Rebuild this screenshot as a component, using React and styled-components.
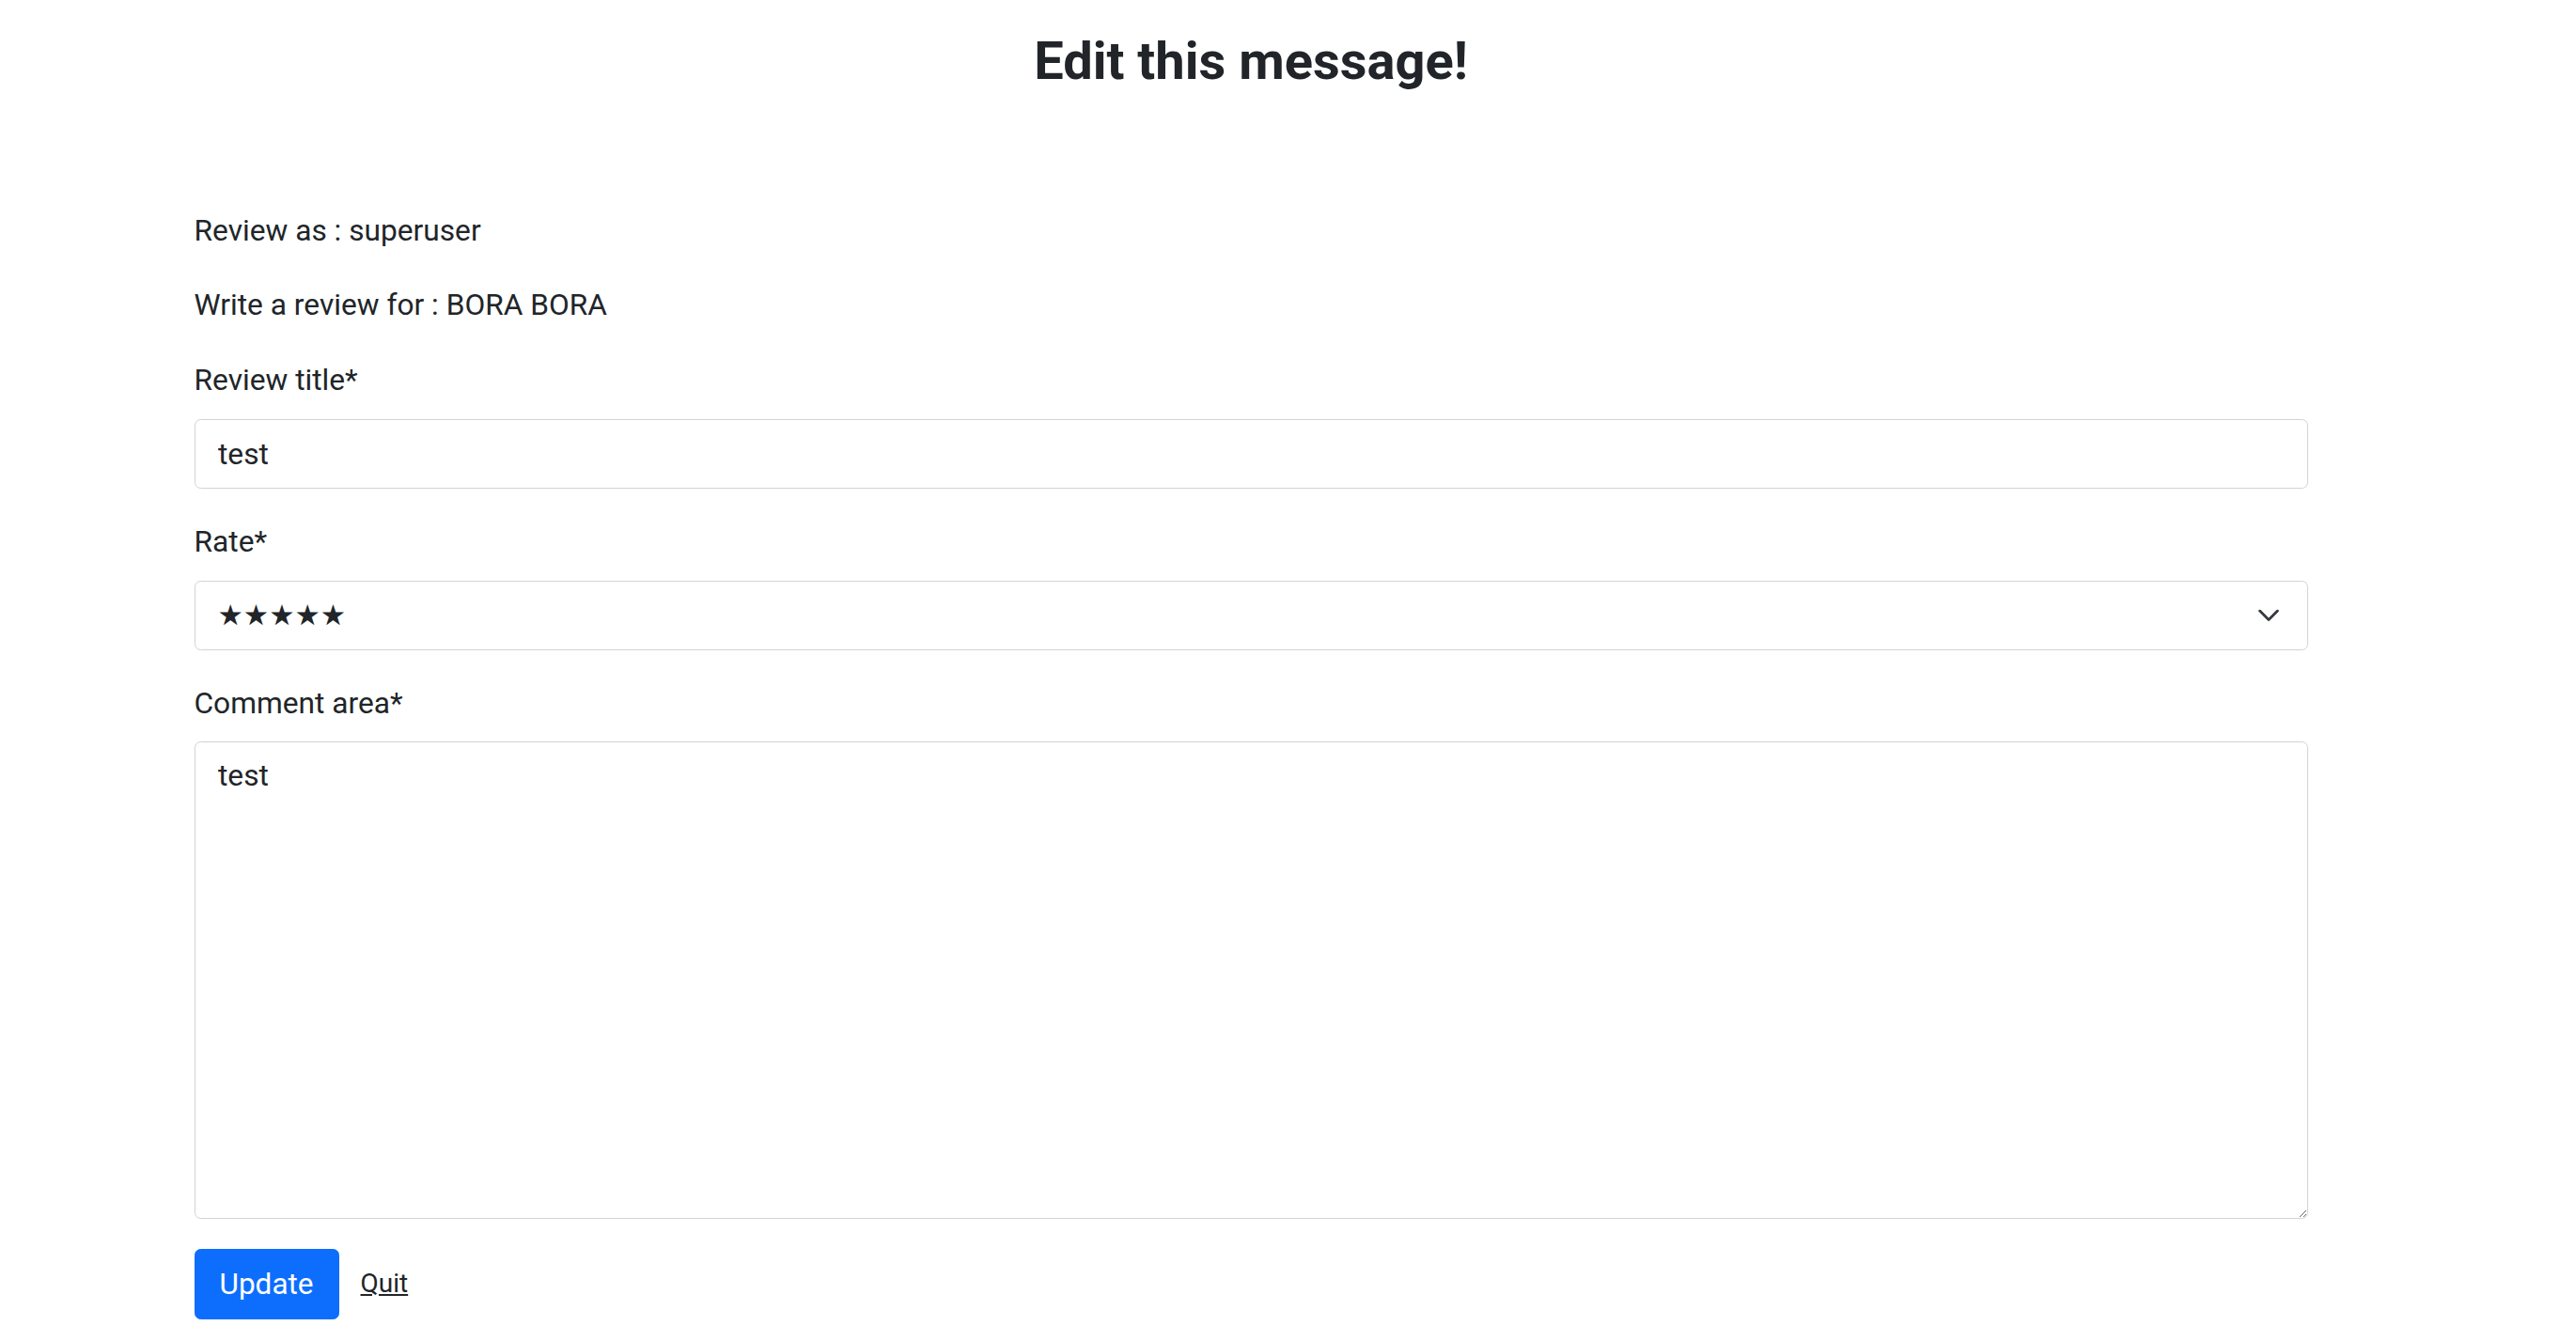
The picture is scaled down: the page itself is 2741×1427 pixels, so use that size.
import React from "react";
import styled, { createGlobalStyle } from "styled-components";

const GlobalStyle = createGlobalStyle`
  html, body {
    margin: 0;
    padding: 0;
    background: #fff;
  }
  body {
    font-family: Roboto, "Liberation Sans", sans-serif;
    font-size: 31.7px;
    line-height: 47.25px;
    color: #212529;
  }
  * {
    box-sizing: border-box;
  }
`;

const Page = styled.div`
  padding-right: 79px;
`;

const Container = styled.div`
  width: 2249px;
  margin: 0 auto;
`;

const Title = styled.h1`
  margin: 32px 0 0;
  font-size: 56px;
  line-height: 67px;
  font-weight: 700;
  text-align: center;
  color: #212529;
`;

const Form = styled.form`
  display: flex;
  flex-direction: column;
  gap: 32.5px;
  margin-top: 122.5px;
`;

const InfoLine = styled.p`
  margin: 0;
`;

const Field = styled.div`
  display: flex;
  flex-direction: column;
  gap: 17.5px;
`;

const Label = styled.label`
  display: block;
`;

const controlBase = `
  width: 100%;
  border: 1.75px solid #ced4da;
  border-radius: 6.5px;
  background: #fff;
  font-family: Roboto, "DejaVu Sans", sans-serif;
  font-size: 31.7px;
  line-height: 47.25px;
  color: #212529;
  outline: none;
  margin: 0;
`;

const TextInput = styled.input`
  ${controlBase}
  height: 74.5px;
  padding: 0 24.5px;
`;

const SelectWrap = styled.div`
  position: relative;
`;

const Select = styled.select`
  ${controlBase}
  height: 74.5px;
  padding: 0 70px 0 24px;
  font-family: "DejaVu Sans", sans-serif;
  font-size: 30.5px;
  appearance: none;
  -webkit-appearance: none;
`;

const Chevron = styled.svg`
  position: absolute;
  right: 31px;
  top: 50%;
  transform: translateY(-50%);
  pointer-events: none;
`;

const TextArea = styled.textarea`
  ${controlBase}
  display: block;
  height: 508px;
  padding: 11.9px 24.5px;
  resize: vertical;
`;

const Actions = styled.div`
  display: flex;
  align-items: center;
  gap: 23px;
  margin-top: -1px;
`;

const PrimaryButton = styled.button`
  height: 75px;
  padding: 0 26px;
  border: 1.75px solid #0d6efd;
  border-radius: 6.5px;
  background: #0d6efd;
  color: #fff;
  font-family: Roboto, "Liberation Sans", sans-serif;
  font-size: 31.5px;
  line-height: 47px;
  cursor: pointer;
`;

const QuitLink = styled.a`
  color: #212529;
  text-decoration: underline;
  font-size: 28px;
  line-height: 42px;
  cursor: pointer;
`;

export default function App() {
  return (
    <>
      <GlobalStyle />
      <Page>
        <Container>
          <Title>Edit this message!</Title>
          <Form onSubmit={(e) => e.preventDefault()}>
            <InfoLine>Review as : superuser</InfoLine>
            <InfoLine>Write a review for : BORA BORA</InfoLine>
            <Field>
              <Label htmlFor="title">Review title*</Label>
              <TextInput id="title" type="text" defaultValue="test" />
            </Field>
            <Field>
              <Label htmlFor="rate">Rate*</Label>
              <SelectWrap>
                <Select id="rate" defaultValue="5">
                  <option value="5">★★★★★</option>
                  <option value="4">★★★★</option>
                  <option value="3">★★★</option>
                  <option value="2">★★</option>
                  <option value="1">★</option>
                </Select>
                <Chevron width="22" height="13" viewBox="0 0 22 13">
                  <polyline
                    points="1.6,1.6 11,11 20.4,1.6"
                    fill="none"
                    stroke="#343a40"
                    strokeWidth="2.8"
                    strokeLinecap="round"
                    strokeLinejoin="round"
                  />
                </Chevron>
              </SelectWrap>
            </Field>
            <Field>
              <Label htmlFor="comment">Comment area*</Label>
              <TextArea id="comment" defaultValue="test" />
            </Field>
            <Actions>
              <PrimaryButton type="submit">Update</PrimaryButton>
              <QuitLink href="#">Quit</QuitLink>
            </Actions>
          </Form>
        </Container>
      </Page>
    </>
  );
}
